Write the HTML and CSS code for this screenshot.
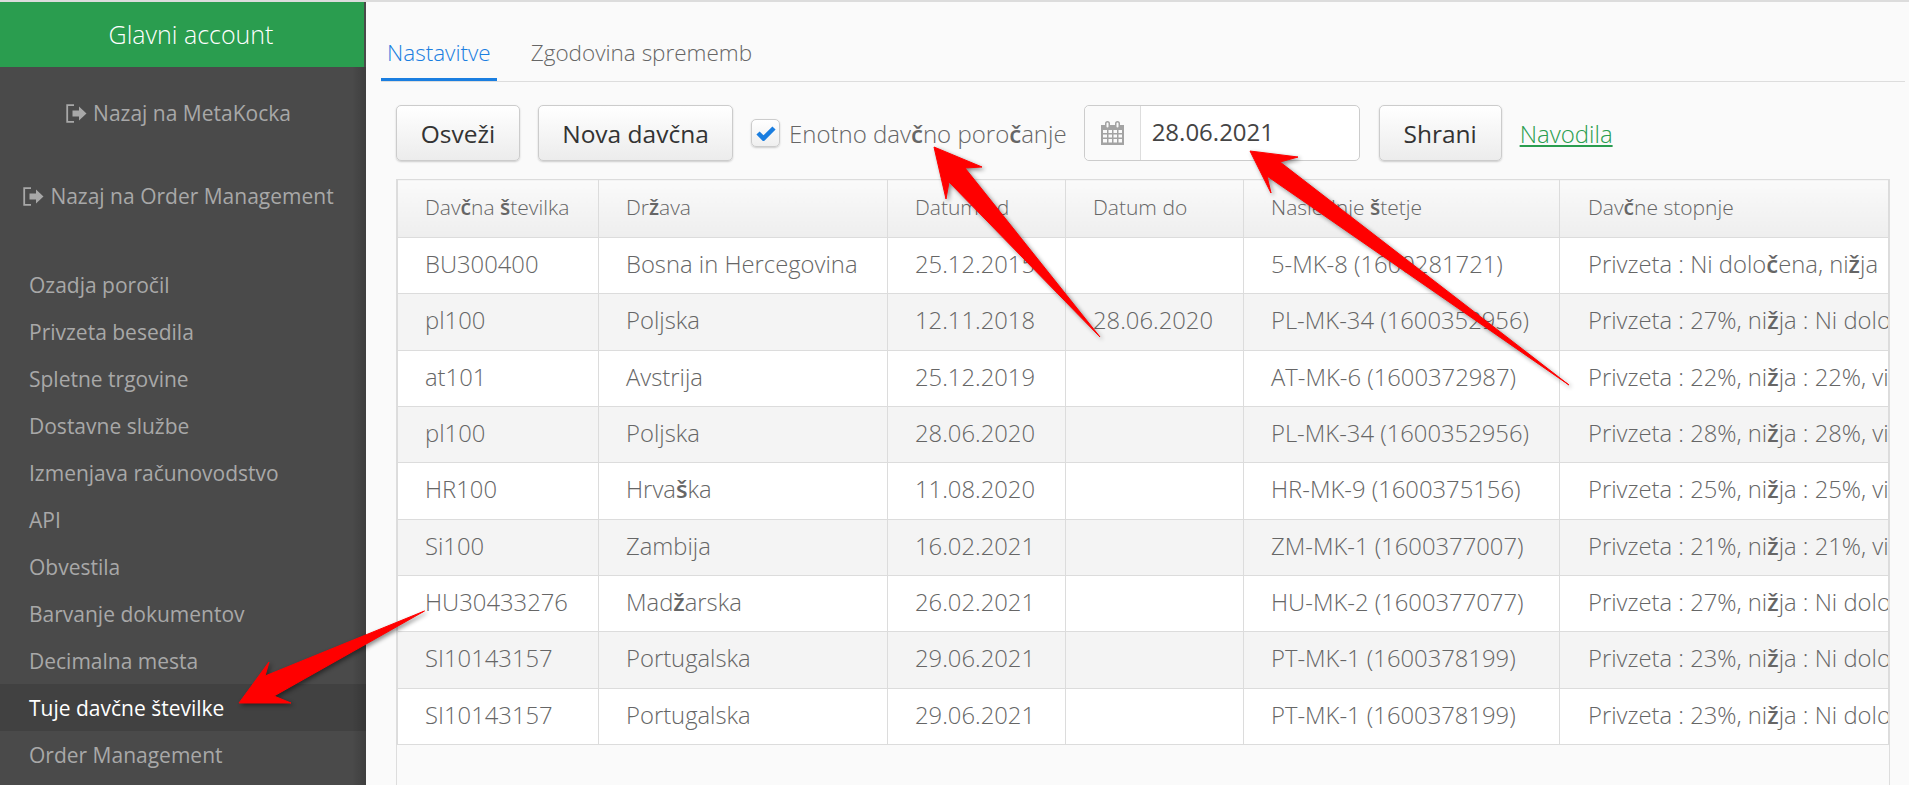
FILE: index.html
```html
<!DOCTYPE html>
<html lang="sl">
  <head>
    <meta charset="UTF-8" />
    <meta name="viewport" content="width=device-width, initial-scale=1.0" />
    <title>Tuje davčne številke</title>
    <link rel="stylesheet" href="styles.css">
  </head>
  <body>
    <div class="app">
      <aside class="sidebar">
        <div class="account">Glavni account</div>
        <div class="back-links">
          <a class="back-link">
            <svg class="exit-icon" viewBox="0 0 21 19"><path d="M8 1.2H1.2v16.6H8" fill="none" stroke="currentColor" stroke-width="1.8"/><path d="M6.5 6.5h6.5V2.5l7.5 7-7.5 7v-4H6.5z" fill="currentColor"/></svg>
            Nazaj na MetaKocka
          </a>
          <a class="back-link">
            <svg class="exit-icon" viewBox="0 0 21 19"><path d="M8 1.2H1.2v16.6H8" fill="none" stroke="currentColor" stroke-width="1.8"/><path d="M6.5 6.5h6.5V2.5l7.5 7-7.5 7v-4H6.5z" fill="currentColor"/></svg>
            Nazaj na Order Management
          </a>
        </div>
        <ul class="menu">
          <li>Ozadja poročil</li>
          <li>Privzeta besedila</li>
          <li>Spletne trgovine</li>
          <li>Dostavne službe</li>
          <li>Izmenjava računovodstvo</li>
          <li>API</li>
          <li>Obvestila</li>
          <li>Barvanje dokumentov</li>
          <li>Decimalna mesta</li>
          <li class="active">Tuje davčne številke</li>
          <li>Order Management</li>
        </ul>
      </aside>

      <main class="content">
        <nav class="tabs">
          <a class="tab tab-active">Nastavitve</a>
          <a class="tab">Zgodovina sprememb</a>
        </nav>

        <div class="toolbar">
          <button class="btn btn-refresh">Osveži</button>
          <button class="btn btn-new">Nova davčna</button>
          <label class="check-label">
            <span class="checkbox">
              <svg viewBox="0 0 20 16"><path d="M2 8l5.500 5.500L18 3" fill="none" stroke="#1a7ee0" stroke-width="4.500"/></svg>
            </span>
            <span>Enotno dav<b>č</b>no poro<b>č</b>anje</span>
          </label>
          <div class="date-group">
            <span class="date-addon">
              <svg viewBox="0 0 23 24"><path fill="#a3a3a3" d="M0 4h4V2.500a2.500 2.500 0 0 1 5 0V4h5V2.500a2.500 2.500 0 0 1 5 0V4h4v20H0z"/><path fill="#fafafa" d="M5.500 2.500a1 1 0 0 1 2 0v3a1 1 0 0 1-2 0zM15.500 2.500a1 1 0 0 1 2 0v3a1 1 0 0 1-2 0zM2 9h4v3H2zM7.500 9h3.500v3H7.500zM12.500 9h3.500v3h-3.500zM17.500 9H21v3h-3.500zM2 13.500h4v3H2zM7.500 13.500h3.500v3H7.500zM12.500 13.500h3.500v3h-3.500zM17.500 13.500H21v3h-3.500zM2 18h4v3.500H2zM7.500 18h3.500v3.500H7.500zM12.500 18h3.500v3.500h-3.500zM17.500 18H21v3.500h-3.500z"/></svg>
            </span>
            <span class="date-value">28.06.2021</span>
          </div>
          <button class="btn btn-save">Shrani</button>
          <a class="help-link">Navodila</a>
        </div>

        <div class="table-wrap">
          <table>
            <colgroup>
              <col class="col-number" />
              <col class="col-country" />
              <col class="col-date" />
              <col class="col-date" />
              <col class="col-seq" />
              <col />
            </colgroup>
            <thead>
              <tr>
                <th>Dav<b>č</b>na <b>š</b>tevilka</th>
                <th>Dr<b>ž</b>ava</th>
                <th>Datum od</th>
                <th>Datum do</th>
                <th>Naslednje <b>š</b>tetje</th>
                <th>Dav<b>č</b>ne stopnje</th>
              </tr>
            </thead>
            <tbody>
              <tr>
                <td>BU300400</td>
                <td>Bosna in Hercegovina</td>
                <td>25.12.2015</td>
                <td></td>
                <td>5-MK-8 (1600281721)</td>
                <td>Privzeta : Ni dolo<b>č</b>ena, ni<b>ž</b>ja</td>
              </tr>
              <tr>
                <td>pl100</td>
                <td>Poljska</td>
                <td>12.11.2018</td>
                <td>28.06.2020</td>
                <td>PL-MK-34 (1600352956)</td>
                <td>Privzeta : 27%, ni<b>ž</b>ja : Ni dolo<b>č</b>ena</td>
              </tr>
              <tr>
                <td>at101</td>
                <td>Avstrija</td>
                <td>25.12.2019</td>
                <td></td>
                <td>AT-MK-6 (1600372987)</td>
                <td>Privzeta : 22%, ni<b>ž</b>ja : 22%, vi<b>š</b>ja</td>
              </tr>
              <tr>
                <td>pl100</td>
                <td>Poljska</td>
                <td>28.06.2020</td>
                <td></td>
                <td>PL-MK-34 (1600352956)</td>
                <td>Privzeta : 28%, ni<b>ž</b>ja : 28%, vi<b>š</b>ja</td>
              </tr>
              <tr>
                <td>HR100</td>
                <td>Hrva<b>š</b>ka</td>
                <td>11.08.2020</td>
                <td></td>
                <td>HR-MK-9 (1600375156)</td>
                <td>Privzeta : 25%, ni<b>ž</b>ja : 25%, vi<b>š</b>ja</td>
              </tr>
              <tr>
                <td>Si100</td>
                <td>Zambija</td>
                <td>16.02.2021</td>
                <td></td>
                <td>ZM-MK-1 (1600377007)</td>
                <td>Privzeta : 21%, ni<b>ž</b>ja : 21%, vi<b>š</b>ja</td>
              </tr>
              <tr>
                <td>HU30433276</td>
                <td>Mad<b>ž</b>arska</td>
                <td>26.02.2021</td>
                <td></td>
                <td>HU-MK-2 (1600377077)</td>
                <td>Privzeta : 27%, ni<b>ž</b>ja : Ni dolo<b>č</b>ena</td>
              </tr>
              <tr>
                <td>SI10143157</td>
                <td>Portugalska</td>
                <td>29.06.2021</td>
                <td></td>
                <td>PT-MK-1 (1600378199)</td>
                <td>Privzeta : 23%, ni<b>ž</b>ja : Ni dolo<b>č</b>ena</td>
              </tr>
              <tr>
                <td>SI10143157</td>
                <td>Portugalska</td>
                <td>29.06.2021</td>
                <td></td>
                <td>PT-MK-1 (1600378199)</td>
                <td>Privzeta : 23%, ni<b>ž</b>ja : Ni dolo<b>č</b>ena</td>
              </tr>
            </tbody>
          </table>
        </div>
      </main>
    </div>

    <!-- red annotation arrows drawn over the screenshot -->
    <svg class="arrows" viewBox="0 0 1909 785">
      <polygon points="424.500,611 265,676 269,662 239,703 291,703 274,696" />
      <polygon points="934,147 982,167 965,168 1100,337 949,182 946,199" />
      <polygon points="1250,151 1298,157 1280,162 1569,385 1267,176 1271,193" />
    </svg>
  </body>
</html>
```

FILE: styles.css
```css
* {
  box-sizing: border-box;
}
html,
body {
  height: 100%;
}
body {
  margin: 0;
  overflow: hidden;
  background: #fafafa;
  border-top: 2px solid #dcdcdc;
  font-family: "Open Sans", sans-serif;
  color: #666;
}
.app {
  display: flex;
  height: 783px;
}

/* sidebar */
.sidebar {
  position: relative;
  flex: 0 0 366px;
  background: #4a4a4a;
  color: #a8a8a8;
  font-size: 21px;
}
.sidebar::after {
  content: "";
  position: absolute;
  top: 65px;
  right: 0;
  bottom: 0;
  width: 14px;
  background: linear-gradient(to right, rgba(0, 0, 0, 0), rgba(0, 0, 0, 0.16));
}
.account {
  width: 364px;
  height: 65px;
  line-height: 65px;
  padding-left: 18px;
  background: #2a9d4f;
  color: #fff;
  font-size: 25px;
  font-weight: 300;
  text-align: center;
}
.back-links {
  display: flex;
  flex-direction: column;
  gap: 51px;
  width: 357px;
  padding-top: 30px;
}
.back-link {
  display: flex;
  align-items: center;
  justify-content: center;
  gap: 6px;
  height: 32px;
  line-height: 32px;
}
.exit-icon {
  width: 21px;
  height: 19px;
}
.menu {
  list-style: none;
  margin: 49px 0 0;
  padding: 0;
}
.menu li {
  height: 47px;
  line-height: 47px;
  padding: 1px 0 0 29px;
}
.menu .active {
  background: #414141;
  color: #fff;
}

/* tabs */
.content {
  flex: 1;
  min-width: 0;
}
.tabs {
  display: flex;
  gap: 28px;
  height: 80px;
  margin: 0 4px 0 15px;
  padding-top: 29px;
  border-bottom: 1px solid #ddd;
  font-size: 22.500px;
  font-weight: 300;
}
.tab {
  height: 50px;
  line-height: 43px;
  padding: 0 6px;
}
.tab-active {
  color: #1a7ee0;
  border-bottom: 3px solid #1a7ee0;
}

/* toolbar */
.toolbar {
  display: flex;
  align-items: center;
  height: 56px;
  margin: 23px 0 18px 30px;
  font-size: 24px;
}
.btn {
  height: 56px;
  padding: 0;
  background: linear-gradient(#fff, #ececec);
  border: 1px solid #ccc;
  border-radius: 5px;
  box-shadow: 0 1px 2px #ccc;
  color: #333;
  font: inherit;
  font-size: 24.500px;
}
.btn-refresh {
  width: 124px;
  margin-right: 18px;
}
.btn-new {
  width: 195px;
  margin-right: 18px;
}
.check-label {
  display: flex;
  align-items: center;
  gap: 9px;
  margin-right: 17px;
  font-weight: 300;
}
.checkbox {
  display: flex;
  align-items: center;
  justify-content: center;
  width: 29px;
  height: 28px;
  background: linear-gradient(#fff, #efefef);
  border: 1px solid #ccc;
  border-radius: 5px;
  box-shadow: 0 1px 2px #ccc;
}
.checkbox svg {
  width: 20px;
  height: 16px;
}
.date-group {
  display: flex;
  width: 276px;
  height: 56px;
  margin-right: 19px;
  background: #fff;
  border: 1px solid #ccc;
  border-radius: 5px;
  color: #444;
}
.date-addon {
  display: flex;
  align-items: center;
  justify-content: center;
  width: 56px;
  background: #fafafa;
  border-right: 1px solid #ddd;
  border-radius: 5px 0 0 5px;
}
.date-addon svg {
  width: 23px;
  height: 24px;
}
.date-value {
  padding-left: 11px;
  line-height: 52px;
}
.btn-save {
  width: 123px;
  margin-right: 18px;
}
.help-link {
  color: #2a9d4f;
  font-weight: 300;
  text-decoration: underline;
}

/* table */
.table-wrap {
  width: 1494px;
  height: 606px;
  margin-left: 30px;
  overflow: hidden;
  border-left: 1px solid #ddd;
  border-right: 1px solid #ddd;
}
table {
  width: 100%;
  table-layout: fixed;
  border-collapse: collapse;
}
.col-number {
  width: 201px;
}
.col-country {
  width: 289px;
}
.col-date {
  width: 178px;
}
.col-seq {
  width: 316px;
}
th,
td {
  height: 56.330px;
  padding: 0 0 3px 27px;
  overflow: hidden;
  border: 1px solid #dcdcdc;
  text-align: left;
  white-space: nowrap;
  font-weight: 300;
}
th:last-child,
td:last-child {
  padding-left: 28px;
}
th b,
td b,
.check-label b {
  font-weight: 600;
}
th {
  height: 58px;
  background: linear-gradient(#fafafa, #eee);
  font-size: 21px;
}
td {
  background: #fff;
  font-size: 23.800px;
}
tbody tr:nth-child(even) td {
  background: #f4f4f4;
}

/* annotation overlay */
.arrows {
  position: absolute;
  left: 0;
  top: 0;
  width: 1909px;
  height: 785px;
  pointer-events: none;
}
.arrows polygon {
  fill: #f00;
  stroke: #f00;
  stroke-width: 1;
  stroke-linejoin: round;
  filter: drop-shadow(2px 2px 2px rgba(0, 0, 0, 0.45));
}
```
